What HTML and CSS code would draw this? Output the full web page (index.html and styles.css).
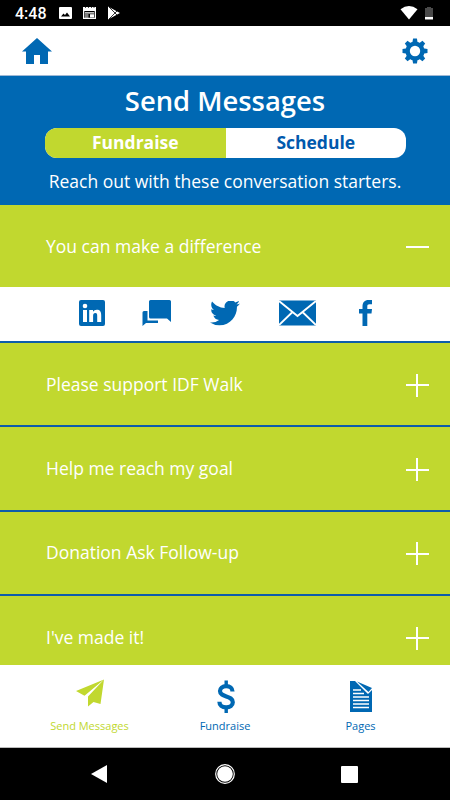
FILE: index.html
```html
<!DOCTYPE html>
<html lang="en">
	<head>
		<meta charset="utf-8">
		<title>Send Messages</title>
		<link rel="stylesheet" href="styles.css">
	</head>
	<body>
		<div class="phone">

			<!-- status bar -->
			<div class="status">
				<span class="time">4:48</span>
				<svg class="note" width="62" height="14" viewBox="0 0 62 14">
					<path fill="#fff" fill-rule="evenodd" d="M1 1h11q1 0 1 1v10q0 1-1 1H1q-1 0-1-1V2q0-1 1-1zM2 10.500h9L8 6.500 6 9 4.500 7.500z"/>
					<path fill="#fff" fill-rule="evenodd" d="M24 1h13v12H24zM25.300 5v6.800h10.400V5z"/>
					<path fill="#fff" d="M26 6.200h9v1.200H26zM26 8.500h3.500v1H26zM26 10.400h3.500v1H26zM31 8.200h4v3.200H31z"/>
					<path stroke="#000" stroke-width=".7" d="M26.500 0v2M29.500 0v2M32.500 0v2M35 0v2"/>
					<path fill="#fff" d="M49 .500L61 7 49 13.500z"/>
					<path fill="none" stroke="#000" stroke-width=".8" d="M50 1l8 8M50 13l8-8"/>
				</svg>
				<svg class="signal" width="34" height="15" viewBox="0 0 34 15">
					<path fill="#fff" d="M.500 3.200Q9-3 17.500 3.200L9 13.500z"/>
					<path fill="#4a4a4a" d="M27 1h4v1h2v9h-8V2h2z"/>
					<path fill="#fff" d="M25 11h8v2.500h-8z"/>
				</svg>
			</div>

			<div class="header">
				<svg width="30" height="26" viewBox="0 0 30 26">
					<path fill="#0068b3" d="M15 0l15 13.500h-4V26h-8v-9h-6v9H4V13.500H0z"/>
				</svg>
				<svg width="26" height="26" viewBox="-13 -13 26 26">
					<g fill="#0068b3">
						<path id="tooth" d="M-2.700-8l.8-4.500h3.800L2.700-8v16l-.8 4.500h-3.800L-2.700 8z"/>
						<use href="#tooth" transform="rotate(45)"/>
						<use href="#tooth" transform="rotate(90)"/>
						<use href="#tooth" transform="rotate(135)"/>
						<circle r="9.600"/>
					</g>
					<circle r="5.200" fill="#fff"/>
				</svg>
			</div>

			<div class="top">
				<h1>Send Messages</h1>
				<div class="tabs">
					<div class="tab on">Fundraise</div>
					<div class="tab">Schedule</div>
				</div>
				<p>Reach out with these conversation starters.</p>
			</div>

			<!-- message list -->
			<div class="list">
				<div class="item first"><span>You can make a difference</span><i class="sign"></i></div>
				<div class="share">
					<svg width="26" height="26" viewBox="0 0 26 26">
						<rect width="26" height="26" rx="2" fill="#0068b3"/>
						<circle cx="6" cy="6" r="2.300" fill="#fff"/>
						<path fill="#fff" d="M4 10h4v12H4zM10.200 10H14v1.700c.8-1.300 2.200-2 3.800-2 3.300 0 4.400 2 4.400 5.500V22h-4v-6c0-1.800-.2-3-1.900-3-1.600 0-2.200 1.200-2.200 3v6h-3.900z"/>
					</svg>
					<svg class="chat" width="30" height="26" viewBox="0 0 30 26">
						<path fill="#0068b3" d="M2 11h3.500v9.500H16V23H4l-3.500 3V12.500Q.500 11 2 11z"/>
						<path fill="#0068b3" d="M8.500 0h19Q29 0 29 1.500V22l-4-3.500H8.500Q7 18.500 7 17V1.500Q7 0 8.500 0z"/>
					</svg>
					<svg class="bird" width="30" height="25" viewBox="0 2.700 24 19.600" preserveAspectRatio="none">
						<path fill="#0068b3" d="M23.950 4.570a10 10 0 0 1-2.820.770 4.960 4.960 0 0 0 2.160-2.720c-.950.550-2 .950-3.130 1.180a4.920 4.920 0 0 0-8.380 4.480C7.690 8.090 4.070 6.130 1.640 3.160a4.820 4.820 0 0 0-.67 2.480c0 1.710.870 3.210 2.190 4.100a4.900 4.900 0 0 1-2.230-.620v.060a4.920 4.920 0 0 0 3.950 4.830 5 5 0 0 1-2.210.080 4.940 4.940 0 0 0 4.600 3.420A9.870 9.870 0 0 1 0 19.540a13.990 13.990 0 0 0 7.550 2.210c9.050 0 14-7.500 14-13.980l-.020-.640a9.940 9.940 0 0 0 2.420-2.560z"/>
					</svg>
					<svg class="mail" width="37" height="26" viewBox="0 0 37 26">
						<path fill="#0068b3" d="M0 .500h37v25H0z"/>
						<path fill="none" stroke="#fff" stroke-width="1.800" d="M0 1l18.500 15L37 1M0 25l13.500-13M37 25L23.500 12"/>
					</svg>
					<svg class="face" width="14" height="26" viewBox="0 0 14 26">
						<path fill="#0068b3" d="M3.500 26V13.500H0V9h3.500V6.500C3.500 2.300 5.700 0 9.500 0H13v4.300h-2.500C8.800 4.300 8.300 5 8.300 6.500V9H13l-.5 4.500H8.300V26z"/>
					</svg>
				</div>
				<div class="item"><span>Please support IDF Walk</span><i class="sign plus"></i></div>
				<div class="item"><span>Help me reach my goal</span><i class="sign plus"></i></div>
				<div class="item"><span>Donation Ask Follow-up</span><i class="sign plus"></i></div>
				<div class="item"><span>I've made it!</span><i class="sign plus"></i></div>
			</div>

			<!-- bottom menu -->
			<div class="menu">
				<div class="link on">
					<svg width="28" height="34" viewBox="0 0 28 34">
						<path fill="#c1d82f" d="M28 .500L0 12l8.500 4.800zM28 .500L12 17.500V27.500l5.500-4.500 7 2z"/>
					</svg>
					<span>Send Messages</span>
				</div>
				<div class="link">
					<svg class="dollar" width="18" height="34" viewBox="0 0 18 34">
						<path fill="none" stroke="#0068b3" stroke-width="4.200" d="M15.500 12.500C15.500 9 13 7.200 9.200 7.200S3 9.100 3 12.100c0 3.300 3 4.300 6.300 5.400 3.600 1.200 6.500 2.300 6.500 5.800 0 3.300-2.800 5-6.600 5-4.200 0-6.800-2-6.800-5.600"/>
						<path stroke="#0068b3" stroke-width="3.400" d="M9.200 1.500v5M9.200 28v6"/>
					</svg>
					<span>Fundraise</span>
				</div>
				<div class="link">
					<svg width="22" height="34" viewBox="0 0 22 34">
						<path fill="#0068b3" d="M0 2h5l13 13 4-4v22H0z"/>
						<path fill="#0068b3" d="M7 2.500l15 6.500-3.500 4z"/>
						<path stroke="#fff" stroke-width="1.400" d="M3 11h8M3 14.500h11M3 18h16M3 21.500h16M3 25h16M3 28.500h16"/>
					</svg>
					<span>Pages</span>
				</div>
			</div>

			<div class="keys">
				<svg width="16" height="18" viewBox="0 0 16 18"><path fill="#fff" d="M0 9L16 0v18z"/></svg>
				<svg class="home" width="20" height="20" viewBox="0 0 20 20">
					<circle cx="10" cy="10" r="9.300" fill="none" stroke="#fff" stroke-width="1.200"/>
					<circle cx="10" cy="10" r="7.800" fill="#fff"/>
				</svg>
				<svg width="17" height="17" viewBox="0 0 17 17"><rect width="17" height="17" rx="1" fill="#fff"/></svg>
			</div>
		</div>
	</body>
</html>
```
FILE: styles.css
```css
*{
	margin: 0;
	padding: 0;
	box-sizing: border-box;
}
body {
	font-family: "Open Sans", "Noto Sans", sans-serif;
	font-variant-ligatures: none;
	background-color: #fff;
}
svg {
	display: block;
	flex: none;
}
.phone {
	width: 450px;
	height: 800px;
	display: flex;
	flex-direction: column;
	overflow: hidden;
}
.status {
	height: 26px;
	flex: none;
	display: flex;
	align-items: center;
	padding: 0 16px 0 15px;
	background-color: #000;
	color: #fff;
}
.time {
	width: 44px;
	font: 500 16px/26px Roboto, sans-serif;
	padding-top: 2px;
}
.signal {
	margin-left: auto;
}
.header {
	height: 50px;
	flex: none;
	display: flex;
	justify-content: space-between;
	align-items: center;
	padding: 0 22px;
	border-bottom: 1px solid #9fb9d6;
}
.top {
	height: 129px;
	flex: none;
	background-color: #0068b3;
	color: #fff;
	text-align: center;
}
h1 {
	font-size: 27.4px;
	font-weight: 600;
	line-height: 50px;
	padding-bottom: 2px;
	white-space: nowrap;
}
.tabs {
	display: flex;
	width: 361px;
	height: 30px;
	margin: 0 0 0 45px;
	border-radius: 12px;
	overflow: hidden;
	background-color: #fff;
}
.tab {
	flex: 1;
	font-size: 17.5px;
	font-weight: 700;
	line-height: 29px;
	color: #0059ad;
}
.tab.on {
	background-color: #c1d82f;
	color: #fff;
}
.top p {
	font-size: 17.5px;
	line-height: 46px;
	white-space: nowrap;
}
.list {
	flex: 1;
	min-height: 0;
	overflow: hidden;
}
.item {
	height: 84.4px;
	display: flex;
	justify-content: space-between;
	align-items: center;
	padding: 0 21.5px 0 46px;
	border-top: 2px solid #0c5cab;
	background-color: #c1d82f;
	color: #fff;
	font-size: 17.5px;
}
.item span {
	padding-bottom: 1px;
}
.item.first {
	height: 82px;
	border-top: 0;
}
.sign {
	width: 23px;
	height: 23px;
	margin-top: 2px;
	background: linear-gradient(#fff, #fff) center / 23px 2px no-repeat;
}
.sign.plus {
	background: linear-gradient(#fff, #fff) center / 23px 2px no-repeat, linear-gradient(#fff, #fff) center / 2px 23px no-repeat;
}
.share {
	height: 54px;
	display: flex;
	align-items: center;
	padding: 0 0 2px 79px;
}
.chat {
	margin-left: 37px;
}
.bird {
	margin-left: 38px;
}
.mail {
	margin-left: 39px;
}
.face {
	margin-left: 43px;
}
.menu {
	height: 83px;
	flex: none;
	display: flex;
	justify-content: space-between;
	padding: 14px 22px 0;
	border-bottom: 1px solid #bbb;
}
.link {
	width: 135px;
	display: flex;
	flex-direction: column;
	align-items: center;
	color: #0068b3;
	font-size: 11px;
	line-height: 26px;
}
.dollar {
	margin-left: 2px;
}
.link.on {
	color: #c1d82f;
}
.keys {
	height: 52px;
	flex: none;
	display: flex;
	justify-content: space-between;
	align-items: center;
	padding: 0 92px 0 91px;
	background-color: #000;
}
.home {
	margin-left: 2px;
}
```
